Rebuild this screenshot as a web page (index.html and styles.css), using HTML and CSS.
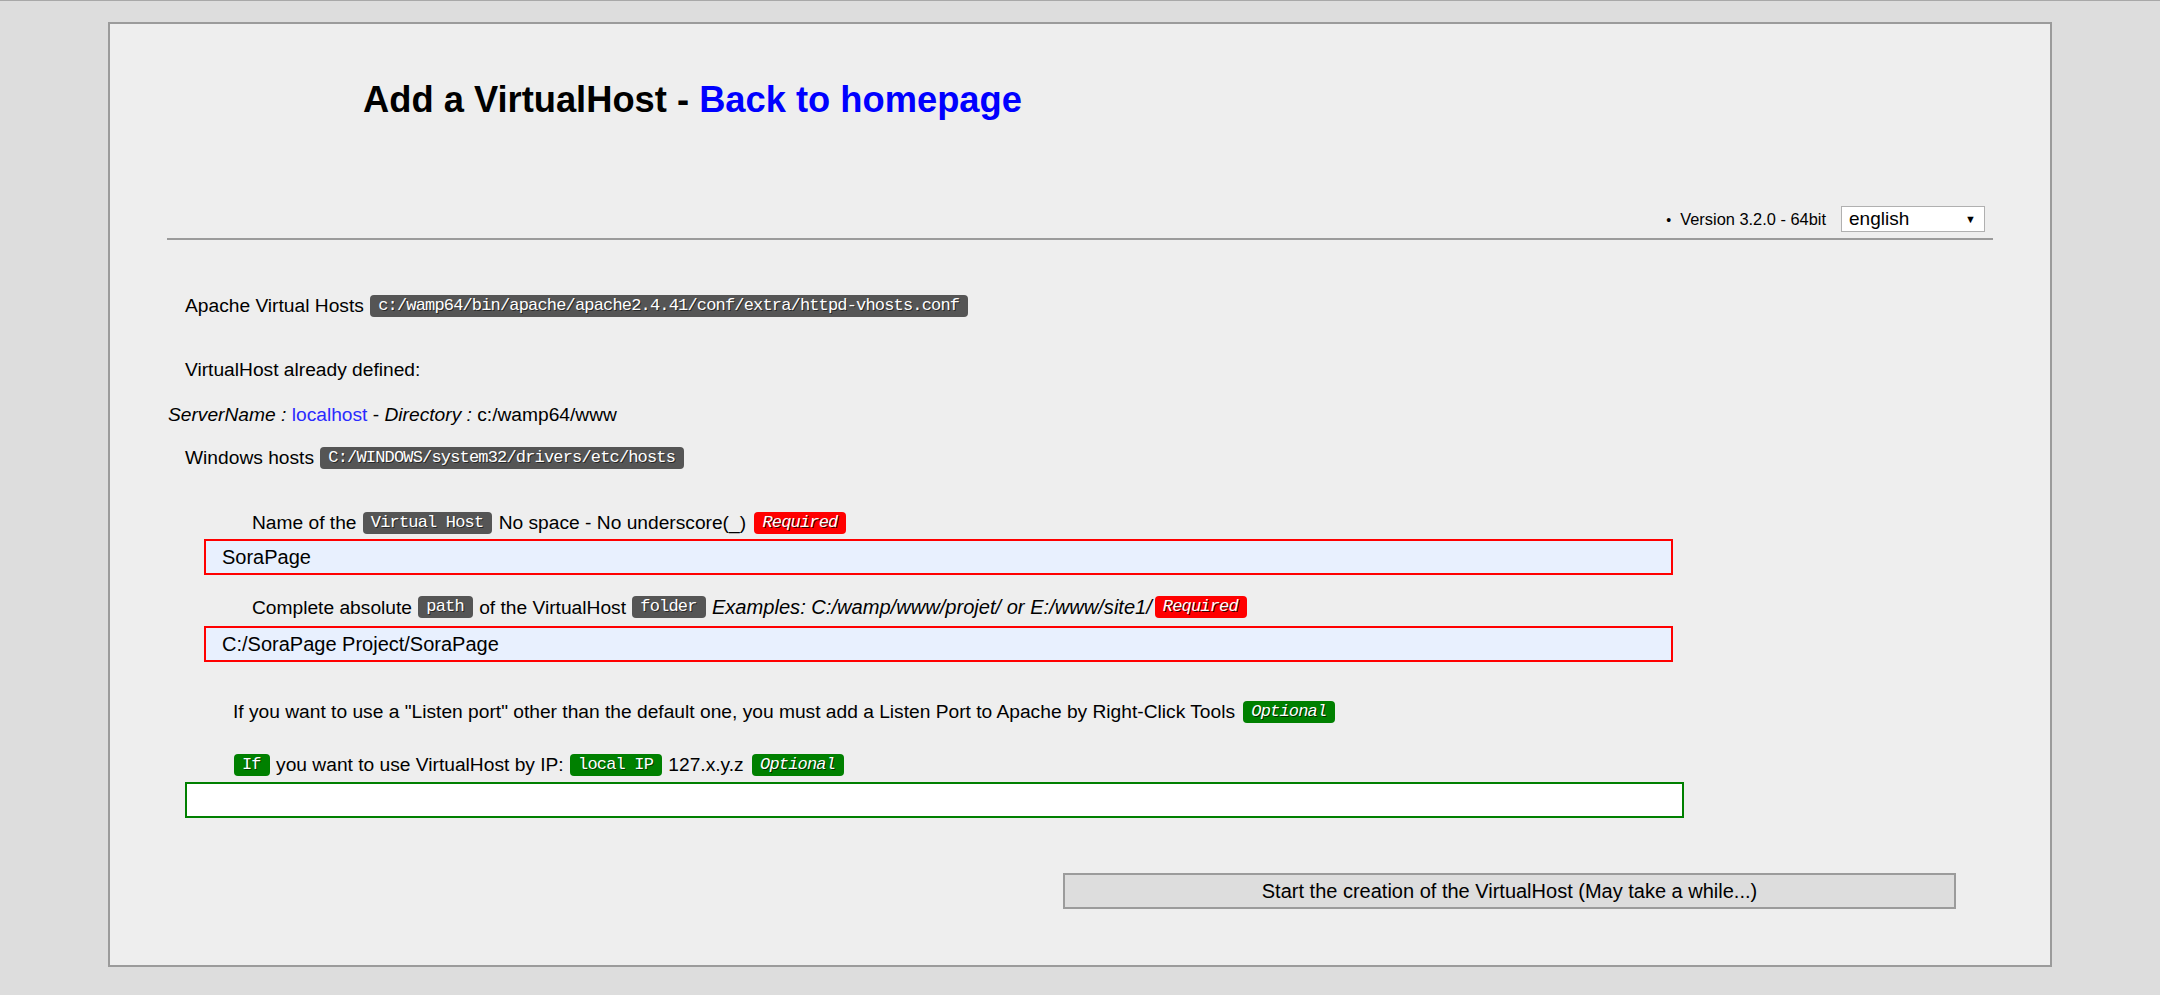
FILE: index.html
```html
<!DOCTYPE html>
<html lang="en">
<head>
<meta charset="utf-8">
<title>Add a VirtualHost</title>
<link rel="stylesheet" href="styles.css">
</head>
<body>
<div class="page">
  <header class="head">
    <h1 class="title">Add a VirtualHost - <a class="home" href="#">Back to homepage</a></h1>
    <div class="meta">
      <ul class="utility"><li>Version 3.2.0 - 64bit</li></ul>
      <div class="lang"><span class="lang-text">english</span><span class="lang-arrow">&#9660;</span></div>
    </div>
  </header>
  <hr class="rule">
  <main class="content">
    <p class="line l-apache">Apache Virtual Hosts <code class="tag">c:/wamp64/bin/apache/apache2.4.41/conf/extra/httpd-vhosts.conf</code></p>
    <p class="line l-defined">VirtualHost already defined:</p>
    <p class="line l-server"><i>ServerName :</i> <a class="vlink" href="#">localhost</a> - <i>Directory :</i> c:/wamp64/www</p>
    <p class="line l-hosts">Windows hosts <code class="tag">C:/WINDOWS/system32/drivers/etc/hosts</code></p>

    <form class="vform">
      <label class="line l-name">Name of the <code class="tag">Virtual Host</code> No space - No underscore(_) <code class="tag req">Required</code></label>
      <input class="field field-req f-name" type="text" value="SoraPage">

      <label class="line l-path">Complete absolute <code class="tag">path</code> of the VirtualHost <code class="tag">folder</code> <i class="example">Examples: C:/wamp/www/projet/ or E:/www/site1/</i><code class="tag req">Required</code></label>
      <input class="field field-req f-path" type="text" value="C:/SoraPage Project/SoraPage">

      <p class="line l-port">If you want to use a "Listen port" other than the default one, you must add a Listen Port to Apache by Right-Click Tools <code class="tag opt">Optional</code></p>

      <label class="line l-ip"><code class="tag ok">If</code> you want to use VirtualHost by IP: <code class="tag ok">local IP</code> 127.x.y.z <code class="tag opt">Optional</code></label>
      <input class="field field-opt f-ip" type="text" value="">

      <div class="actions">
        <button class="submit" type="button">Start the creation of the VirtualHost (May take a while...)</button>
      </div>
    </form>
  </main>
</div>
</body>
</html>
```
FILE: styles.css
```css
html {
  background: #dddddd;
  border-top: 1px solid #a8a8a8;
}
body {
  margin: 0;
  font-family: "Liberation Sans", Arial, sans-serif;
  font-size: 19.2px;
  color: #000;
}
.page {
  width: 90%;
  margin: 21px auto 0;
  border: 2px solid #9b9b9b;
  background: #eeeeee;
  box-sizing: border-box;
}
.head {
  display: flex;
  flex-direction: column;
}
.title {
  margin: 55px 0 0 253px;
  font: bold 36.3px/41px "Liberation Sans", Arial, sans-serif;
  color: #000;
}
.home {
  color: #0000ff;
  text-decoration: none;
}
.meta {
  margin-top: 86px;
  padding-right: 65px;
  display: flex;
  justify-content: flex-end;
  align-items: center;
  height: 26px;
}
.utility {
  margin: 0 15px 0 0;
  padding: 0;
  list-style: none;
  font-size: 16.4px;
}
.utility li::before {
  content: "\2022";
  margin-right: 9px;
  font-size: 14px;
}
.lang {
  box-sizing: border-box;
  width: 144px;
  height: 26px;
  background: #fff;
  border: 1px solid #b0b0b0;
  display: flex;
  align-items: center;
  justify-content: space-between;
  padding: 0 8px 0 7px;
  font-size: 19px;
}
.lang-arrow {
  font-size: 11px;
}
.rule {
  margin: 6px 57px 0;
  height: 2px;
  border: 0;
  background: #9b9b9b;
}
.content {
  display: flex;
  flex-direction: column;
}
.vform {
  display: flex;
  flex-direction: column;
  margin: 0;
}
.line {
  display: block;
  margin: 0;
  line-height: 22px;
  white-space: nowrap;
}
.example {
  font-size: 20.1px;
}
.tag {
  display: inline-block;
  vertical-align: top;
  height: 22px;
  line-height: 22px;
  padding: 0 9px 0 8px;
  border-radius: 4px;
  background: #555555;
  color: #fff;
  font-family: "Liberation Mono", "DejaVu Sans Mono", monospace;
  font-size: 17px;
  font-style: normal;
  letter-spacing: -0.83px;
  text-shadow: 1px 1px 0 rgba(0,0,0,0.55);
  margin: 0 1px;
}
.tag.req {
  background: #ff0000;
  font-style: italic;
  margin-left: 3px;
  text-shadow: 1px 1px 0 rgba(0,0,0,0.8);
}
.tag.ok {
  background: #008000;
}
.tag.opt {
  background: #008000;
  font-style: italic;
  margin-left: 3px;
  text-shadow: 1px 1px 0 rgba(0,0,0,0.7);
}
.vlink {
  color: #2a2aff;
  text-decoration: none;
}
.l-apache { margin-top: 55px; padding-left: 75px; }
.l-defined { margin-top: 42px; padding-left: 75px; }
.l-server { margin-top: 23px; padding-left: 58px; }
.l-hosts { margin-top: 21px; padding-left: 75px; }
.l-name { margin-top: 43px; padding-left: 142px; }
.l-path { margin-top: 21px; padding-left: 142px; }
.l-port { margin-top: 39px; padding-left: 123px; }
.l-ip { margin-top: 31px; padding-left: 123px; }

.field {
  box-sizing: border-box;
  height: 36px;
  padding: 0 16px;
  font-family: "Liberation Sans", Arial, sans-serif;
  font-size: 20px;
  color: #000;
  outline: none;
}
.field-req {
  margin-left: 94px;
  width: 1469px;
  border: 2px solid #ff0000;
  background: #e8f0fe;
}
.f-name { margin-top: 5px; }
.f-path { margin-top: 7px; }
.field-opt {
  margin: 6px 0 0 75px;
  width: 1499px;
  border: 2px solid #008000;
  background: #ffffff;
}
.actions {
  margin-top: 55px;
  padding-left: 953px;
  padding-bottom: 56px;
  display: flex;
}
.submit {
  box-sizing: border-box;
  width: 893px;
  height: 36px;
  background: #dddddd;
  border: 2px solid #9b9b9b;
  font-family: "Liberation Sans", Arial, sans-serif;
  font-size: 20px;
  color: #000;
  padding: 0;
}
```
